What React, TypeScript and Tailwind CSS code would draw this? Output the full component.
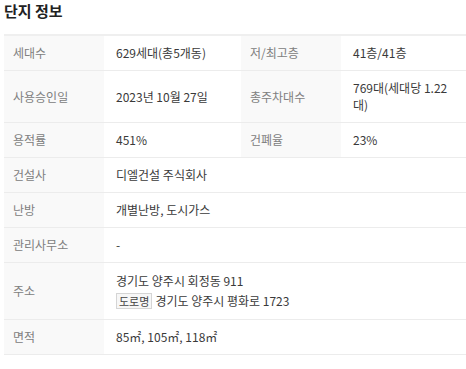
import React from 'react';

type Cell = { label: string; value: React.ReactNode };

const rows: Cell[][] = [
  [
    { label: '세대수', value: '629세대(총5개동)' },
    { label: '저/최고층', value: '41층/41층' },
  ],
  [
    { label: '사용승인일', value: '2023년 10월 27일' },
    { label: '총주차대수', value: '769대(세대당 1.22 대)' },
  ],
  [
    { label: '용적률', value: '451%' },
    { label: '건폐율', value: '23%' },
  ],
  [{ label: '건설사', value: '디엘건설 주식회사' }],
  [{ label: '난방', value: '개별난방, 도시가스' }],
  [{ label: '관리사무소', value: '-' }],
  [
    {
      label: '주소',
      value: (
        <div>
          <div className="leading-[19px]">경기도 양주시 회정동 911</div>
          <div className="mt-[1px] flex items-center leading-[19px]">
            <span className="mr-[3px] border border-[#d5d5d5] bg-[#f7f7f7] px-[2px] text-[11px] leading-[14px] text-[#444]">
              도로명
            </span>
            경기도 양주시 평화로 1723
          </div>
        </div>
      ),
    },
  ],
  [{ label: '면적', value: '85㎡, 105㎡, 118㎡' }],
];

export default function App() {
  return (
    <div
      className="w-[466px] bg-white pl-[4px] text-[12px] text-[#3a3a3a]"
      style={{ fontFamily: '"Noto Sans CJK KR", "Noto Sans", sans-serif' }}
    >
      <h2 className="pt-[1px] pb-[13px] text-[15px] font-bold leading-[20px] text-[#222]">단지 정보</h2>
      <table className="w-[462px] table-fixed border-collapse border-t-2 border-[#efefef]">
        <colgroup>
          <col className="w-[100px]" />
          <col className="w-[137px]" />
          <col className="w-[100px]" />
          <col className="w-[125px]" />
        </colgroup>
        <tbody>
          {rows.map((row, i) => (
            <tr key={i} className="border-b border-[#ececec]">
              {row.map((c, j) => (
                <React.Fragment key={j}>
                  <th className="bg-[#f9f9f9] pt-[8px] pb-[9px] pl-[9px] text-left align-middle font-normal leading-[17px] text-[#808080]">
                    {c.label}
                  </th>
                  <td
                    colSpan={row.length === 1 ? 3 : 1}
                    className="pt-[8px] pb-[9px] pl-[12px] pr-[8px] align-middle leading-[17px]"
                  >
                    {c.value}
                  </td>
                </React.Fragment>
              ))}
            </tr>
          ))}
        </tbody>
      </table>
    </div>
  );
}
